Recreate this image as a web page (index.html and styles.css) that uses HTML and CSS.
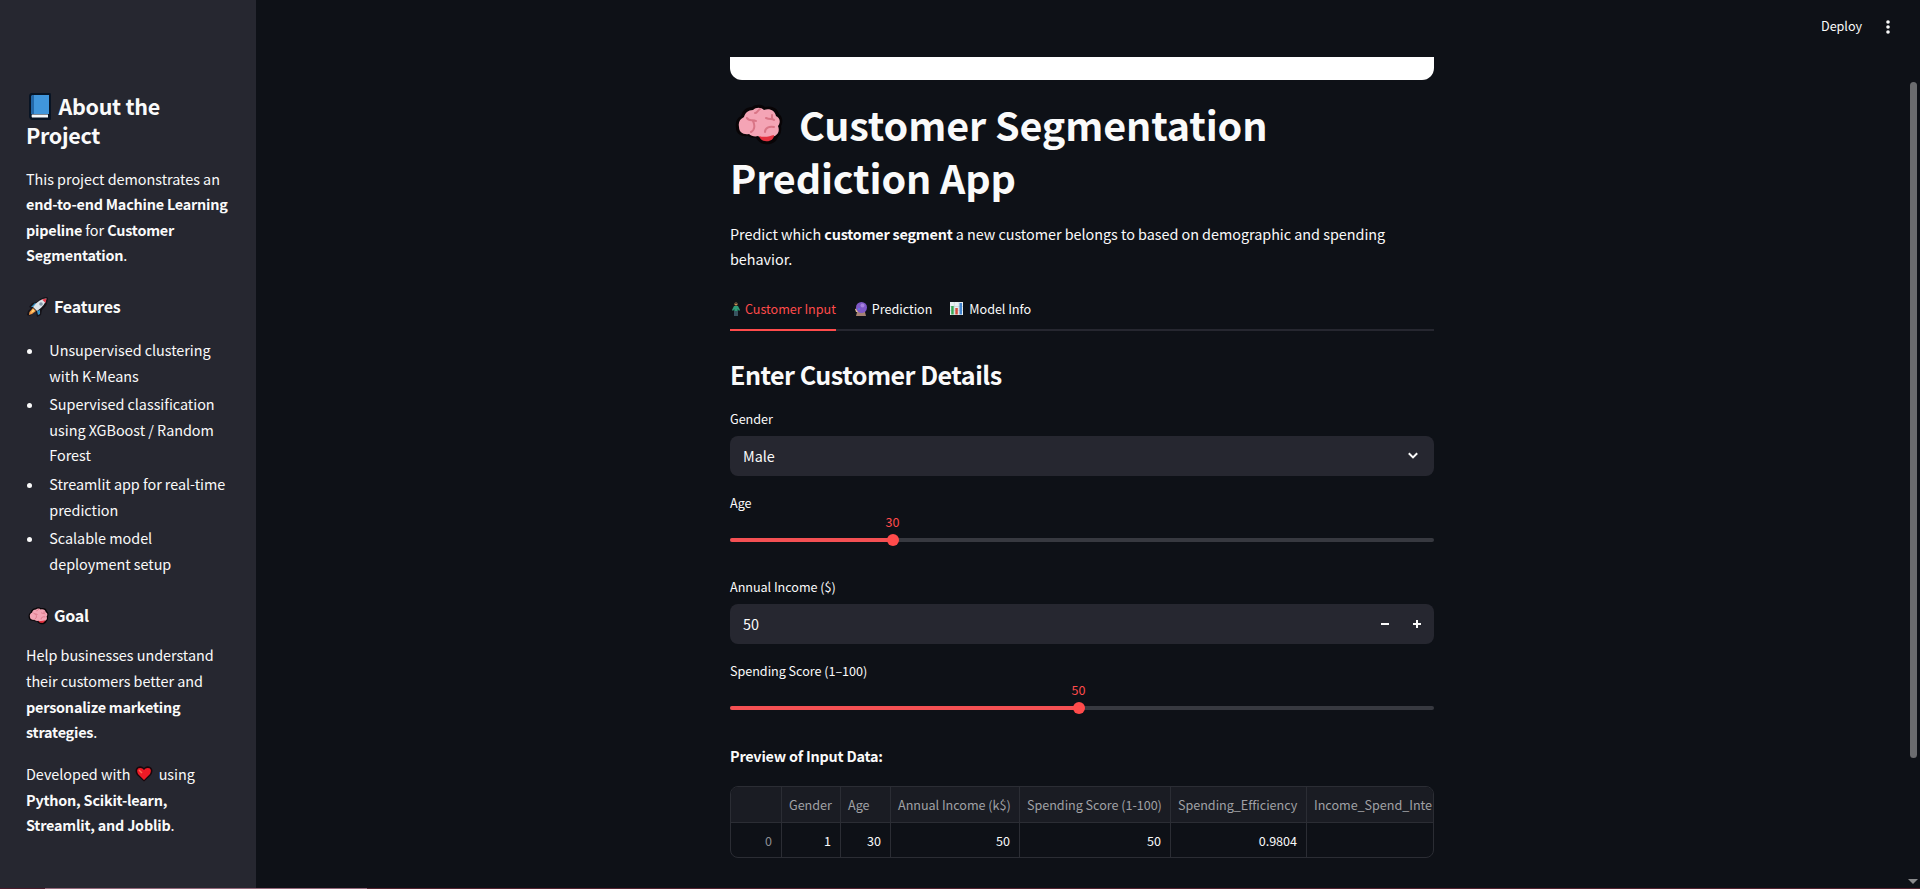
FILE: index.html
```html
<!DOCTYPE html>
<html lang="en">
<head>
<meta charset="utf-8">
<title>Customer Segmentation Prediction App</title>
<link rel="stylesheet" href="styles.css">
</head>
<body>
<svg class="defs" aria-hidden="true">
  <symbol id="brain" viewBox="0 0 48 42">
    <path d="M13 32C5 33 1 29 1 24C0 18 2 14 6 12C7 7 11 3 17 3C20 0 27 0 30 3C36 1 43 4 44 10C48 13 48 19 46 22C47 28 45 31 43 33C41 39 35 41 30 40C26 40 23 37 21 34C19 34 16 34 13 32Z" fill="#080406"/>
    <path d="M14 30C8 31 4 28 4 23C3 18 5 15 9 13C10 9 13 6 18 6C21 3 26 3 29 6C35 4 40 7 41 12C45 14 46 18 43 22C45 27 43 30 40 32C36 33 28 36 23 32C20 33 16 32 14 30Z" fill="#f4a4b5"/>
    <path d="M24 32C30 34 35 32 39 31C39 36 34 38 30 37C27 37 25 35 24 32Z" fill="#e3313f"/>
    <path d="M12 14C14 18 18 15 21 17M18 17C20 21 20 26 16 28M25 5C22 7 22 9 20 9M31 14C35 16 37 14 39 16M37 11V14M39 23C34 22 30 24 30 28" fill="none" stroke="#d97586" stroke-width="2" stroke-linecap="round"/>
  </symbol>
</svg>
<div class="app">
  <aside class="sidebar">
    <h2><svg class="i-book" viewBox="0 0 33 27"><path d="M5 0H24Q25 0 25 2V26Q25 27 24 27H6Q3 26 3 23V3Q3 1 5 0Z" fill="#081424"/><path d="M6 2H8V21H6Q5 21 5 22V3Z" fill="#2468a8"/><path d="M8 2H23V21H8Z" fill="#4096dc"/><path d="M6 21.5H22V24.5H6Q5 23 6 21.5Z" fill="#f4f8fc"/></svg>About the<br>Project</h2>
    <p class="about">This project demonstrates an<br><b>end-to-end Machine Learning<br>pipeline</b> for <b>Customer<br>Segmentation</b>.</p>
    <h3><svg class="i-h3" viewBox="0 0 28 20"><path d="M22 0L23 1Q23 8 17 13L16 18L12 20L11 15L9 14L5 19L2 18L3 14L6 11L4 10L7 6L12 5Q16 0 22 0Z" fill="#151218"/><path d="M10 6L12 7L8 10L6 10Z" fill="#3795c9"/><path d="M15 13L15 17L13 18L12 14Z" fill="#3795c9"/><path d="M21.500 1.500Q14 1.500 8 10L12 14Q20 9 21.500 1.500Z" fill="#dce3e8"/><path d="M21.500 1.500L17 2.500L20.500 6Z" fill="#e4394b"/><circle cx="16" cy="7" r="1.800" fill="#8398a8"/><path d="M8 11L11 14L7 17L4 18L4.500 15Z" fill="#f59b45"/><path d="M8 12L9.500 14L6 16Z" fill="#ffdc7c"/></svg>Features</h3>
    <ul>
      <li>Unsupervised clustering<br>with K-Means</li>
      <li>Supervised classification<br>using XGBoost / Random<br>Forest</li>
      <li>Streamlit app for real-time<br>prediction</li>
      <li>Scalable model<br>deployment setup</li>
    </ul>
    <h3><svg class="i-brain-s"><use href="#brain"/></svg>Goal</h3>
    <p class="goal">Help businesses understand<br>their customers better and<br><b>personalize marketing<br>strategies</b>.</p>
    <p>Developed with <svg class="i-heart" viewBox="0 0 18 16"><path d="M9 15.500L2 9Q-1 4 2 1.500Q6-1 9 2Q12-1 16 1.500Q19 4 16 9Z" fill="#18060a"/><path d="M9 14L3 8Q1 4 3.500 2.300Q7 1 9 4Q11 1 14.500 2.300Q17 4 15 8Z" fill="#ee1a26"/><path d="M4 4L7 7" stroke="#ff6a55" stroke-width="1.500"/></svg>using<br><b>Python, Scikit-learn,<br>Streamlit, and Joblib</b>.</p>
  </aside>

  <div class="content">
    <header class="toolbar"><span>Deploy</span><svg viewBox="0 0 4 14"><g fill="#fafafa"><circle cx="2" cy="2" r="1.800"/><circle cx="2" cy="7" r="1.800"/><circle cx="2" cy="12" r="1.800"/></g></svg></header>
    <main>
      <div class="banner"></div>
      <h1><svg class="i-brain"><use href="#brain"/></svg>Customer Segmentation<br>Prediction App</h1>
      <p class="lead">Predict which <b>customer segment</b> a new customer belongs to based on demographic and spending<br>behavior.</p>
      <nav class="tabs">
        <a class="tab active"><svg class="i-man" viewBox="0 0 8 14"><circle cx="4" cy="2" r="1.600" fill="#c79054"/><path d="M2.500 1Q4-.5 5.500 1V2H2.500Z" fill="#5c4634"/><path d="M2 4H6L8 8L7 9L5.700 7V9H2.300V7L1 9L0 8Z" fill="#2f9b78"/><path d="M2.300 9H3.700V14H2.300ZM4.300 9H5.700V14H4.300Z" fill="#4a7180"/></svg>Customer Input</a>
        <a class="tab"><svg class="i-ball" viewBox="0 0 12 14"><path d="M2 10H10L11 14H1Z" fill="#a58272"/><path d="M0 7L3 6V10H1Z" fill="#e9c48d"/><circle cx="6.500" cy="5.500" r="5.500" fill="#7e58c7"/><circle cx="7.500" cy="3.500" r="2" fill="#a681df"/><circle cx="4" cy="7" r="1" fill="#5d7be0"/></svg>Prediction</a>
        <a class="tab"><svg class="i-chart" viewBox="0 0 13 13"><path d="M0 0H13V13H0Z" fill="#e9eff1"/><path d="M0 4.500H13M0 8.500H13M4.300 0V13M9 0V13" stroke="#bac6cd" stroke-width=".5"/><path d="M1.200 4H3.700V12.500H1.200Z" fill="#38a853"/><path d="M5.300 6H7.800V12.500H5.300Z" fill="#d34c3c"/><path d="M9.500 1H12V12.500H9.500Z" fill="#4285d0"/></svg>Model Info</a>
      </nav>
      <h2 class="section">Enter Customer Details</h2>

      <label>Gender</label>
      <div class="field"><span>Male</span><svg class="chev" viewBox="0 0 10 8"><path d="M.8 1.200L5 5.400L9.200 1.200" fill="none" stroke="#fafafa" stroke-width="2"/></svg></div>

      <label>Age</label>
      <div class="slider"><i class="fill" style="width:162.500px"></i><i class="thumb" style="left:162.500px"></i><output style="left:162.500px">30</output></div>

      <label>Annual Income ($)</label>
      <div class="field number"><span>50</span><svg class="minus" viewBox="0 0 8 8"><path d="M0 3H8V5H0Z" fill="#fafafa"/></svg><svg class="plus" viewBox="0 0 8 8"><path d="M3 0H5V3H8V5H5V8H3V5H0V3H3Z" fill="#fafafa"/></svg></div>

      <label>Spending Score (1–100)</label>
      <div class="slider"><i class="fill" style="width:348.500px"></i><i class="thumb" style="left:348.500px"></i><output style="left:348.500px">50</output></div>

      <p class="preview"><b>Preview of Input Data:</b></p>
      <div class="grid">
        <div class="row head"><span></span><span>Gender</span><span class="left">Age</span><span>Annual Income (k$)</span><span>Spending Score (1-100)</span><span>Spending_Efficiency</span><span class="left">Income_Spend_Inte</span></div>
        <div class="row"><span class="idx">0</span><span>1</span><span>30</span><span>50</span><span>50</span><span>0.9804</span><span></span></div>
      </div>
    </main>
  </div>
  <div class="scroll-thumb"></div>
  <div class="scroll-arrow"></div>
  <div class="edge"></div>
</div>
</body>
</html>
```
FILE: styles.css
```css
* { box-sizing: border-box; }
body {
  margin: 0;
  background: #0e1117;
  color: #fafafa;
  font-family: "Noto Sans CJK SC", "Noto Sans", sans-serif;
  font-size: 14.4px;
  line-height: 25.6px;
  letter-spacing: -0.03px;
  white-space: nowrap;
}
b { letter-spacing: -0.21px; }
.defs { position: absolute; width: 0; height: 0; }
h1, h2, h3, p, ul { margin: 0; padding: 0; }
.app { position: relative; display: flex; width: 1920px; height: 889px; overflow: hidden; }

.sidebar { width: 256px; flex: none; background: #262730; padding: 92px 0 0 26px; }
.sidebar h2 { font-size: 21.500px; line-height: 28.8px; margin-bottom: 16px; letter-spacing: -0.3px; }
.sidebar h3 { font-size: 16.1px; line-height: 21.6px; letter-spacing: -0.27px; }
.about { margin-bottom: 27.6px; }
.sidebar ul { list-style: none; margin: 19.8px 0 28.6px; }
.sidebar li { position: relative; padding-left: 23.300px; margin-bottom: 3px; }
.sidebar li::before {
  content: ""; position: absolute; left: 1px; top: 12px;
  width: 5px; height: 5px; border-radius: 50%; background: #fafafa;
}
.sidebar ul li:last-child { margin-bottom: 0; }
.goal { margin: 16px 0 16.2px; }

.i-book { width: 33px; height: 27px; margin-left: -0.5px; vertical-align: -5px; }
.i-h3 { width: 28px; height: 20px; margin: 0 1px 0 -1px; vertical-align: -4px; }
.i-brain-s { width: 21px; height: 18px; margin: 0 5px 0 2px; vertical-align: -3px; }
.i-heart { width: 18px; height: 16px; margin: 0 6px 0 1px; vertical-align: -2px; }
.i-brain { width: 48px; height: 42px; margin: 0 16px 0 5px; vertical-align: -5px; }

.content { flex: 1; display: flex; flex-direction: column; }
.toolbar {
  height: 57px; padding: 13px 30px 0 0; display: flex; justify-content: flex-end;
  font-size: 12.6px; line-height: 25px;
}
.toolbar svg { width: 4px; height: 14px; margin: 7px 0 0 24px; }
main { width: 704px; margin-left: 474px; }
.banner { height: 23px; background: #fff; border-radius: 0 0 12px 12px; margin-bottom: 18px; }
h1 { font-size: 39.500px; line-height: 52.8px; font-weight: 700; margin-bottom: 17px; letter-spacing: -0.13px; }
.tabs {
  display: flex; gap: 16px; height: 42px; margin-top: 17.2px;
  border-bottom: 2px solid #262730; font-size: 12.6px; line-height: 22px;
}
.tab { height: 42px; padding-top: 9px; }
.active { color: #ff4b4b; border-bottom: 2px solid #ff4b4b; }
.i-man { width: 8px; height: 14px; margin: 0 5px 0 2px; vertical-align: -2px; }
.i-ball { width: 12px; height: 14px; margin: 0 5px 0 3px; vertical-align: -2px; }
.i-chart { width: 13px; height: 13px; margin: 0 6px 0 2px; vertical-align: -1px; }
.section { font-size: 25.1px; line-height: 33.6px; margin: 27.4px 0 17px; letter-spacing: -0.52px; }
label { display: block; font-size: 12.6px; line-height: 20px; height: 27px; }
.field {
  height: 40px; padding: 0 16px 0 13px; margin-bottom: 17px; border-radius: 8px;
  background: #262730; display: flex; align-items: center;
}
.field span { flex: 1; }
.chev { width: 10px; height: 8px; }
.number { padding-right: 13px; }
.minus, .plus { width: 8px; height: 8px; }
.plus { margin-left: 24px; }
.slider { position: relative; height: 4px; margin: 18px 0 35px; border-radius: 2px; background: #373940; }
.slider .fill { display: block; height: 4px; border-radius: 2px; background: #f45053; }
.thumb { position: absolute; top: -4px; width: 12px; height: 12px; margin-left: -6px; border-radius: 50%; background: #ff4b4b; }
.slider output {
  position: absolute; top: -26px; transform: translateX(-50%);
  color: #ff4b4b; font-size: 12.6px; line-height: 20px;
}
.preview { margin: -1.5px 0 17px; }
.grid { height: 72px; border: 1px solid #2b2d34; border-radius: 8px; overflow: hidden; font-size: 12.6px; line-height: 35px; }
.row { display: grid; grid-template-columns: 51px 59px 50px 129px 151px 136px 126px; height: 35px; }
.row span { text-align: right; padding: 0 9px 0 7px; border-right: 1px solid #2b2d34; overflow: hidden; }
.row span:last-child { border-right: 0; padding-right: 0; }
.row .left { text-align: left; }
.head { height: 36px; background: #1a1c23; color: #a0a1a5; border-bottom: 1px solid #2b2d34; }
.row .idx { color: #8d8e93; }

.scroll-thumb { position: absolute; left: 1910px; top: 82px; width: 7px; height: 676px; border-radius: 4px; background: #6b6c6f; }
.scroll-arrow {
  position: absolute; left: 1908px; top: 879px;
  border: 5px solid transparent; border-top-color: #8a8b8d; border-bottom: 0;
}
.edge {
  position: absolute; left: 0; top: 888px; width: 1920px; height: 1px;
  background: linear-gradient(90deg, #4a1a2b 45px, #96687a 45px, #96687a 367px, #54222f 367px);
}
```
